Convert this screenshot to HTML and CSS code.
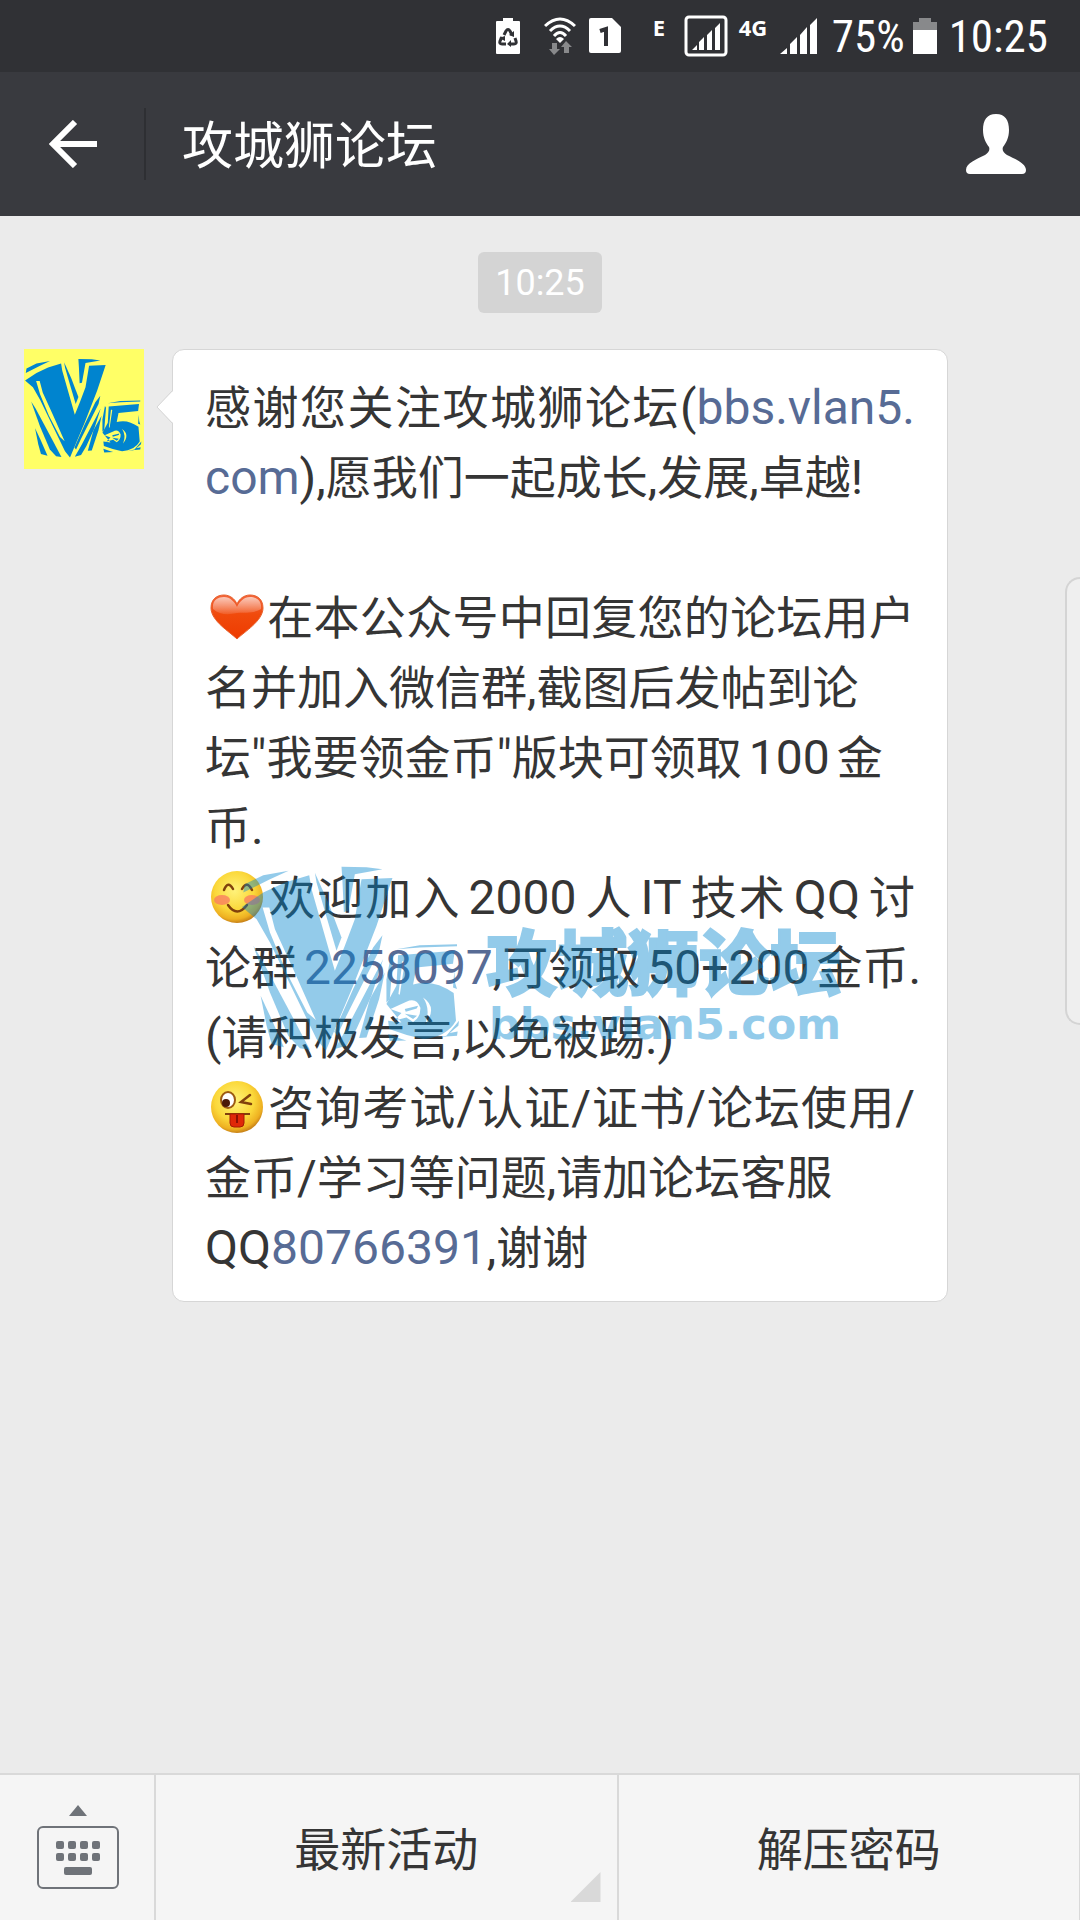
FILE: index.html
```html
<!DOCTYPE html>
<html lang="zh-CN">
<head>
<meta charset="utf-8">
<meta name="viewport" content="width=device-width, initial-scale=1">
<title>攻城狮论坛</title>
<link rel="stylesheet" href="styles.css">
</head>
<body>
<svg class="defs" aria-hidden="true">
  <defs>
    <symbol id="v5" viewBox="60 26 673 673">
      <g fill="#0084cf" fill-rule="evenodd">
        <path d="M70 160L74 135L130 108L206 94L150 120Z"/>
        <path d="M66 203L130 160L195 130L268 108L275 150L345 395L375 320L405 240L425 120L518 116L470 260L400 440L318 635L290 600L150 310L110 240ZM128 205L148 205L165 270L220 390L288 543L262 520L200 400L150 280Z"/>
        <path d="M285 100L325 190L365 295L350 335L322 240L290 130Z"/>
        <path d="M365 82L440 84L488 90L405 105L385 215L372 218L368 130Z"/>
        <path d="M122 470L150 530L192 625L155 615L140 560Z"/>
        <path d="M100 320L125 360L200 500L270 632L240 628L205 590L150 460Z"/>
        <path d="M488 288L478 335L430 430L380 530L352 590L343 578L400 450L460 325Z"/>
        <path d="M490 360L445 445L385 560L345 630L380 620L410 570L455 470Z"/>
        <path d="M495 400L478 480L440 595L418 597L450 480Z"/>
        <path d="M535 348L705 335L700 374L590 385L580 436Q640 418 702 462L709 545Q680 595 610 600Q560 590 508 570L505 545L545 550L512 510L500 495L530 440ZM512 510L560 488Q590 474 602 506Q603 535 580 549L560 535L522 545L545 522ZM610 475Q655 505 616 556Q634 510 610 475ZM548 365L536 465L540 467L555 370ZM555 510L595 500L591 508L558 518ZM555 524L592 530L580 540Z"/>
        <path d="M530 330L600 318L712 315L712 321L600 325Z"/>
        <path d="M500 420L514 345L520 355L510 480L500 490Z"/>
        <path d="M640 600L680 590L718 545L716 560L690 582L714 577L712 590L680 592Z"/>
        <path d="M704 395L700 445L712 450L706 430Z"/>
        <path d="M505 585L545 600L560 604L510 606Z"/>
      </g>
    </symbol>
    <radialGradient id="face" cx="45%" cy="38%" r="62%">
      <stop offset="0" stop-color="#fff27a"/><stop offset=".6" stop-color="#fbd83a"/><stop offset=".88" stop-color="#eeb021"/><stop offset="1" stop-color="#c88218"/>
    </radialGradient>
    <linearGradient id="heart" x1="0" y1="0" x2="0" y2="1">
      <stop offset="0" stop-color="#f3653a"/><stop offset=".45" stop-color="#f04a0c"/><stop offset="1" stop-color="#ee3b00"/>
    </linearGradient>
    <linearGradient id="shine" x1="0" y1="0" x2="0" y2="1">
      <stop offset="0" stop-color="#fff" stop-opacity=".65"/><stop offset="1" stop-color="#fff" stop-opacity=".1"/>
    </linearGradient>
  </defs>
</svg>

<div class="status">
  <svg class="i-saver" viewBox="0 0 24 36"><path fill="#fff" d="M7 0H17V3H23Q24 3 24 4V35Q24 36 23 36H1Q0 36 0 35V4Q0 3 1 3H7Z"/><g fill="none" stroke="#303135" stroke-width="3"><path d="M8 17L10 13Q12 10 14 13L16 17"/><path d="M19 20L20 23Q21 26 18 26H14"/><path d="M10 26H6Q3 26 4 23L6 19"/></g><path fill="#303135" d="M18 13L18 19L13 17ZM15 22V29L11 26ZM3 20L9 18L9 23Z"/></svg>
  <svg class="i-wifi" viewBox="0 0 32 38"><g fill="none" stroke="#fff" stroke-width="3"><path d="M1 9Q16 -5 31 9"/><path d="M6 14Q16 4 26 14"/><path d="M10 19Q16 12 22 19"/></g><path fill="#fff" d="M12 22Q16 18 20 22L16 26Z"/><path fill="#88898b" d="M8 26H13V32H16L10 38L5 32H8ZM20 36H25V30H28L22 24L17 30H20Z"/></svg>
  <svg class="i-sim" viewBox="0 0 32 36"><path fill="#fff" d="M2 0H23L32 9V33Q32 35 30 35H2Q0 35 0 33V2Q0 0 2 0Z"/><path fill="none" stroke="#303135" stroke-width="4" d="M11 13L17 11V28"/></svg>
  <span class="net net-e">E</span>
  <svg class="i-box" viewBox="0 0 44 42"><rect x="2" y="2" width="40" height="38" rx="3" fill="none" stroke="#fff" stroke-width="3"/><path fill="#fff" d="M8 35L13 30V35ZM15 27L20 22V35H15ZM23 20L28 15V35H23ZM31 13L36 8V35H31Z"/></svg>
  <span class="net net-4g">4G</span>
  <svg class="i-signal" viewBox="0 0 37 36"><path fill="#fff" d="M0 36L7 30V36ZM10 26L17 19V36H10ZM20 17L27 9V36H20ZM30 7L37 0V36H30Z"/></svg>
  <span class="pct">75%</span>
  <svg class="i-batt" viewBox="0 0 24 37"><path fill="#88898b" d="M6 0H18V4H24V12H0V4H6Z"/><path fill="#fff" d="M0 12H24V36H0Z"/></svg>
  <time class="clock">10:25</time>
</div>

<header class="bar">
  <button class="back" aria-label="返回"><svg viewBox="0 0 48 48"><path fill="none" stroke="#fff" stroke-width="6" d="M26 2L4 24L26 46M4 24H48"/></svg></button>
  <h1>攻城狮论坛</h1>
  <button class="profile" aria-label="资料"><svg viewBox="0 0 62 60"><path fill="#fff" d="M31 0C40 0 44 6 44 16C44 24 41 29 38 33C37 36 38 38 42 41C50 45 61 49 61 56Q61 60 57 60H5Q1 60 1 56C1 49 12 45 20 41C24 38 25 36 24 33C21 29 18 24 18 16C18 6 22 0 31 0Z"/></svg></button>
</header>

<main class="chat">
  <time class="stamp">10:25</time>
  <article class="message">
    <svg class="avatar" role="img" aria-label="V5"><use href="#v5"/></svg>
    <div class="bubble">
      <svg class="tail" viewBox="0 0 17 32"><path fill="#fff" d="M17 0L1 16L17 32Z"/><path fill="none" stroke="#d6d6d6" d="M16 0L1 16L16 32"/></svg>
      <p class="full">感谢您关注攻城狮论坛<span class="lat">(<a href="#">bbs.vlan5.</a></span></p>
      <p><span class="lat"><a href="#">com</a>),</span>愿我们一起成长<span class="lat">,</span>发展<span class="lat">,</span>卓越<span class="lat">!</span></p>
      <p><br></p>
      <p class="full"><svg class="emoji" viewBox="0 0 60 52" role="img" aria-label="爱心"><path fill="url(#heart)" stroke="#e8622f" d="M31 48C24 41 5 30 5 17C5 8 11 4 18 4C24 4 29 8 31 13C33 8 38 4 44 4C51 4 57 8 57 17C57 30 38 41 31 48Z"/><path fill="url(#shine)" d="M7 18C6 9 12 6 18 6C24 6 29 11 31 16C33 11 38 6 44 6C50 6 56 9 55 18C46 23 40 21 31 22C22 24 14 24 7 18Z"/></svg>在本公众号中回复您的论坛用户</p>
      <p>名并加入微信群<span class="lat">,</span>截图后发帖到论</p>
      <p>坛<span class="lat">"</span>我要领金币<span class="lat">"</span>版块可领取<span class="lat gap">100</span>金</p>
      <p>币<span class="lat">.</span></p>
      <p class="full"><svg class="emoji" viewBox="0 0 60 52" role="img" aria-label="微笑"><circle cx="31" cy="26" r="26" fill="url(#face)"/><g fill="#fa7962" opacity=".75"><ellipse cx="16" cy="29" rx="8" ry="5"/><ellipse cx="46" cy="29" rx="8" ry="5"/></g><path fill="none" stroke="#81410c" stroke-width="2.5" stroke-linecap="round" d="M18 19Q22 9 27 18M36 18Q41 9 46 19M22 34Q31 47 41 34"/></svg>欢迎加入<span class="lat gap">2000</span>人<span class="lat gap">IT</span>技术<span class="lat gap">QQ</span>讨</p>
      <p>论群<a class="lat gap-before" href="#">2258097</a><span class="lat">,</span>可领取<span class="lat gap">50+200</span>金币<span class="lat">.</span></p>
      <p><span class="lat">(</span>请积极发言<span class="lat">,</span>以免被踢<span class="lat">.)</span></p>
      <p class="full"><svg class="emoji" viewBox="0 0 60 52" role="img" aria-label="调皮"><circle cx="31" cy="26" r="26" fill="url(#face)"/><ellipse cx="22" cy="19" rx="7" ry="8" fill="#fff" stroke="#9c5a12" stroke-width="2"/><circle cx="20" cy="22" r="4" fill="#4b1a08"/><path fill="none" stroke="#81410c" stroke-width="2.5" stroke-linecap="round" d="M44 14L35 21L45 23"/><path d="M19 33H44" stroke="#81410c" stroke-width="2"/><path fill="#e02808" stroke="#a61805" d="M24 33H38V42Q38 46 34 46H28Q24 46 24 42Z"/><path stroke="#8c1004" stroke-width="2" d="M31 34V42"/></svg>咨询考试<span class="lat">/</span>认证<span class="lat">/</span>证书<span class="lat">/</span>论坛使用<span class="lat">/</span></p>
      <p>金币<span class="lat">/</span>学习等问题<span class="lat">,</span>请加论坛客服</p>
      <p><span class="lat">QQ<a href="#">80766391</a>,</span>谢谢</p>
      <div class="mark">
        <svg class="mark-logo"><use href="#v5"/></svg>
        <div class="mark-text"><strong>攻城狮论坛</strong><span>bbs.vlan5.com</span></div>
      </div>
    </div>
  </article>
  <div class="edge"></div>
</main>

<nav class="menu">
  <button class="keys" aria-label="键盘"><svg viewBox="0 0 84 84"><g fill="#6f7379"><path d="M33 11L42 0L51 11Z"/><rect x="20" y="36" width="8" height="8" rx="2"/><rect x="32" y="36" width="8" height="8" rx="2"/><rect x="44" y="36" width="8" height="8" rx="2"/><rect x="56" y="36" width="8" height="8" rx="2"/><rect x="20" y="48" width="8" height="8" rx="2"/><rect x="32" y="48" width="8" height="8" rx="2"/><rect x="44" y="48" width="8" height="8" rx="2"/><rect x="56" y="48" width="8" height="8" rx="2"/><rect x="28" y="62" width="28" height="8" rx="2"/></g><rect x="2" y="22" width="80" height="61" rx="5" fill="none" stroke="#6f7379" stroke-width="2"/></svg></button>
  <button class="item more">最新活动</button>
  <button class="item">解压密码</button>
</nav>
</body>
</html>
```
FILE: styles.css
```css
* { box-sizing: border-box; }

body {
  margin: 0;
  min-height: 100vh;
  display: flex;
  flex-direction: column;
  background: #ebebeb;
  color: #353535;
  font-family: Roboto, "Noto Sans CJK SC", sans-serif;
  overflow-x: hidden;
}

button {
  border: 0;
  padding: 0;
  background: none;
  font: inherit;
  color: inherit;
}

svg { display: block; }
a { color: #576b95; text-decoration: none; }
.defs { position: absolute; width: 0; height: 0; }

/* status bar */
.status {
  height: 72px;
  padding-right: 32px;
  display: flex;
  justify-content: flex-end;
  align-items: center;
  background: #303135;
  color: #fff;
}
.i-saver { width: 24px; height: 36px; margin-right: 24px; }
.i-wifi { width: 32px; height: 38px; margin-right: 13px; }
.i-sim { width: 32px; height: 36px; margin-right: 32px; }
.i-box { width: 44px; height: 42px; margin-right: 11px; }
.i-signal { width: 37px; height: 36px; margin-right: 15px; }
.i-batt { width: 24px; height: 37px; margin: 0 12px 0 8px; }
.net {
  font: bold 22px/24px "Noto Sans", sans-serif;
  padding-bottom: 18px;
}
.net-e { width: 31px; }
.net-4g { width: 41px; }
.pct, .clock {
  padding-top: 2px;
  font: 45px/70px "Roboto Condensed", "Liberation Sans Narrow", Roboto, sans-serif;
}

/* title bar */
.bar {
  height: 144px;
  display: flex;
  align-items: center;
  background: #393a3f;
  color: #fff;
}
.back {
  width: 146px;
  height: 72px;
  padding-left: 49px;
  border-right: 2px solid #2e2f33;
}
.back svg { width: 48px; height: 48px; }
.bar h1 {
  flex: 1;
  margin: 0;
  padding: 6px 0 0 36px;
  font-size: 51px;
  line-height: 72px;
  font-weight: 400;
}
.profile { padding: 0 53px; }
.profile svg { width: 62px; height: 60px; }

/* conversation */
.chat {
  flex: 1;
  position: relative;
  padding: 36px 24px;
  display: flex;
  flex-direction: column;
}
.stamp {
  align-self: center;
  padding: 2px 17px 0;
  border-radius: 6px;
  background: #d4d4d4;
  color: #fff;
  font-size: 36px;
  line-height: 59px;
}
.message {
  margin-top: 36px;
  display: flex;
  align-items: flex-start;
  gap: 28px;
}
.avatar { width: 120px; height: 120px; background: #ffff66; }
.bubble {
  position: relative;
  width: 776px;
  padding: 23px 32px 18px;
  background: #fff;
  border: 1px solid #d6d6d6;
  border-radius: 12px;
}
.bubble p {
  height: 70px;
  margin: 0;
  font-size: 46px;
  line-height: 70px;
  white-space: nowrap;
}
.bubble .full { text-align: justify; text-align-last: justify; }
.lat { font-size: 48px; line-height: 1; }
.gap { margin: 0 7px; }
.gap-before { margin-left: 7px; }
.emoji {
  display: inline-block;
  width: 62px;
  height: 52px;
  vertical-align: -9px;
}
.tail {
  position: absolute;
  left: -17px;
  top: 41px;
  width: 17px;
  height: 32px;
}
.mark {
  position: absolute;
  left: 67px;
  top: 498px;
  display: flex;
  gap: 22px;
  color: #0084cf;
  opacity: .42;
  pointer-events: none;
}
.mark-logo { width: 224px; height: 224px; }
.mark-text {
  padding-top: 70px;
  display: flex;
  flex-direction: column;
  white-space: nowrap;
}
.mark-text strong {
  font: 900 71px/80px "Noto Sans CJK SC", sans-serif;
  -webkit-text-stroke: 2px #0084cf;
}
.mark-text span {
  padding: 2px 0 0 3px;
  font: bold 43px/48px "DejaVu Sans", sans-serif;
}
.edge {
  position: absolute;
  right: 0;
  top: 361px;
  width: 15px;
  height: 448px;
  border: 2px solid #d4d4d4;
  border-right: 0;
  border-radius: 24px 0 0 24px;
  background: #efefef;
}

/* bottom menu */
.menu {
  height: 147px;
  display: flex;
  border-top: 2px solid #d9d9d9;
  border-right: 1px solid #d9d9d9;
  background: #f5f5f5;
}
.keys { width: 154px; padding: 0 0 2px 36px; }
.keys svg { width: 84px; height: 84px; }
.item {
  flex: 1;
  position: relative;
  padding-bottom: 4px;
  border-left: 2px solid #d9d9d9;
  font-size: 46px;
}
.more::after {
  content: "";
  position: absolute;
  right: 16px;
  bottom: 18px;
  width: 30px;
  height: 30px;
  background: #d9d9d9;
  clip-path: polygon(100% 0, 100% 100%, 0 100%);
}
```
